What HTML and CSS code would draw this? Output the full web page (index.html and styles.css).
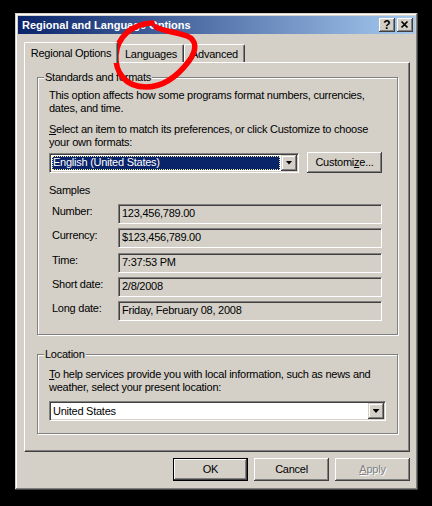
FILE: index.html
```html
<!DOCTYPE html>
<html lang="en">
<head>
    <meta charset="UTF-8">
    <meta name="viewport" content="width=device-width, initial-scale=1.0">
    <title>Regional and Language Options</title>
    <link rel="stylesheet" href="styles.css">
</head>
<body>
    <div class="window">
        <div class="titlebar">
            <span class="title">Regional and Language Options</span>
            <div class="caption-buttons">
                <span class="caption-btn help">?</span>
                <span class="caption-btn close">
                    <svg width="16" height="14" viewBox="0 0 16 14">
                        <path d="M4.5 3.5l6 6M10.5 3.5l-6 6" stroke="#000" stroke-width="1.7" fill="none"/>
                    </svg>
                </span>
            </div>
        </div>

        <div class="dialog">
            <div class="tabs">
                <div class="tab active">Regional Options</div>
                <div class="tab languages">Languages</div>
                <div class="tab advanced">Advanced</div>
            </div>

            <div class="tab-page">
                <div class="group standards">
                    <div class="group-title">Standards and formats</div>
                    <p class="intro">This option affects how some programs format numbers, currencies,<br>dates, and time.</p>
                    <p class="hint"><u>S</u>elect an item to match its preferences, or click Customize to choose<br>your own formats:</p>
                    <div class="format-row">
                        <div class="combo format-combo">
                            <div class="combo-value"><span class="selected">English (United States)</span></div>
                            <div class="combo-arrow"><i></i></div>
                        </div>
                        <button class="btn customize">Customi<u>z</u>e...</button>
                    </div>

                    <div class="samples-title">Samples</div>
                    <div class="samples">
                        <div class="sample"><span class="sample-label">Number:</span><span class="sample-field">123,456,789.00</span></div>
                        <div class="sample"><span class="sample-label">Currency:</span><span class="sample-field">$123,456,789.00</span></div>
                        <div class="sample"><span class="sample-label">Time:</span><span class="sample-field">7:37:53 PM</span></div>
                        <div class="sample"><span class="sample-label">Short date:</span><span class="sample-field">2/8/2008</span></div>
                        <div class="sample"><span class="sample-label">Long date:</span><span class="sample-field">Friday, February 08, 2008</span></div>
                    </div>
                </div>

                <div class="group location">
                    <div class="group-title">Location</div>
                    <p class="intro"><u>T</u>o help services provide you with local information, such as news and<br>weather, select your present location:</p>
                    <div class="combo location-combo">
                        <div class="combo-value">United States</div>
                        <div class="combo-arrow"><i></i></div>
                    </div>
                </div>
            </div>

            <div class="buttons">
                <button class="btn default">OK</button>
                <button class="btn">Cancel</button>
                <button class="btn disabled"><u>A</u>pply</button>
            </div>
        </div>
    </div>

    <!-- red marker scribble around the Languages tab -->
    <svg class="scribble" width="432" height="506" viewBox="0 0 432 506">
        <path d="M152 23C131 24 117 38 116 55C115 72 125 87 146 87C165 87 180 73 189 61C197 50 197 40 187 36C176 32 162 31 156 27"
              fill="none" stroke="#f00" stroke-width="5.5" stroke-linecap="round" stroke-linejoin="round"/>
    </svg>
</body>
</html>
```

FILE: styles.css
```css
body {
    margin: 0;
    padding: 13px 0 0 15px;
    background: #000;
    font-family: "Liberation Sans", Arial, sans-serif;
    font-size: 11px;
    line-height: 13px;
    letter-spacing: -0.25px;
    color: #000;
}
p {
    margin: 0;
    white-space: nowrap;
}

/* window frame */
.window {
    width: 403px;
    height: 477px;
    box-sizing: border-box;
    padding: 3px;
    background: #d4d0c8;
    box-shadow: inset -1px -1px 0 #404040, inset 1px 1px 0 #d4d0c8,
                inset -2px -2px 0 #808080, inset 2px 2px 0 #fff;
}
.titlebar {
    height: 18px;
    display: flex;
    align-items: center;
    justify-content: space-between;
    padding: 0 2px;
    background: linear-gradient(to right, #0a246a, #a6caf0);
}
.title {
    color: #fff;
    font-weight: bold;
    letter-spacing: 0;
    padding-left: 2px;
}
.caption-buttons {
    display: flex;
    gap: 2px;
}
.caption-btn {
    width: 16px;
    height: 14px;
    box-sizing: border-box;
    display: flex;
    align-items: center;
    justify-content: center;
    background: #d4d0c8;
    box-shadow: inset -1px -1px 0 #404040, inset 1px 1px 0 #fff,
                inset -2px -2px 0 #808080, inset 2px 2px 0 #d4d0c8;
}
.caption-btn.help {
    font-weight: bold;
    font-size: 12px;
    letter-spacing: 0;
}
.caption-btn svg {
    display: block;
}

.dialog {
    padding: 8px 5px 0 6px;
}

/* tabs */
.tabs {
    display: flex;
    align-items: flex-end;
    height: 20px;
}
.tab {
    height: 18px;
    box-sizing: border-box;
    padding-top: 3px;
    text-align: center;
    border: 1px solid;
    border-color: #fff #404040 transparent #fff;
    border-bottom: none;
    border-radius: 2px 2px 0 0;
    box-shadow: inset -1px 0 0 #808080;
}
.tab.active {
    width: 94px;
    height: 21px;
    margin-bottom: -1px;
    padding-top: 4px;
    position: relative;
    z-index: 1;
    background: #d4d0c8;
}
.tab.languages {
    width: 66px;
}
.tab.advanced {
    width: 61px;
}

.tab-page {
    height: 390px;
    box-sizing: border-box;
    border: 1px solid;
    border-color: #fff #404040 #404040 #fff;
    box-shadow: inset -1px -1px 0 #808080;
    padding: 14px 11px 0 12px;
}

/* etched group boxes */
.group {
    box-sizing: border-box;
    width: 361px;
    border: 1px solid #808080;
    box-shadow: inset 1px 1px 0 #fff, 1px 1px 0 #fff;
    padding: 0 10px 0 11px;
}
.group.standards {
    height: 258px;
}
.group.location {
    height: 80px;
    margin-top: 19px;
}
.group-title {
    display: table;
    margin: -7px 0 0 -5px;
    padding: 0 1px;
    background: #d4d0c8;
}
.standards .intro {
    margin-top: 5px;
}
.hint {
    margin-top: 8px;
}
.location .intro {
    margin-top: 7px;
}

/* combo boxes */
.combo {
    display: flex;
    box-sizing: border-box;
    height: 20px;
    padding: 1px;
    border: 1px solid;
    border-color: #808080 #fff #fff #808080;
    box-shadow: inset 1px 1px 0 #404040, inset -1px -1px 0 #d4d0c8;
    background: #fff;
}
.combo-value {
    flex: 1;
    display: flex;
    align-items: center;
    padding-left: 2px;
}
.format-combo .combo-value {
    padding: 1px;
}
.selected {
    flex: 1;
    align-self: stretch;
    display: flex;
    align-items: center;
    border: 1px dotted #f4e9a0;
    background: #0a246a;
    color: #fff;
}
.combo-arrow {
    width: 16px;
    height: 16px;
    box-sizing: border-box;
    display: flex;
    align-items: center;
    justify-content: center;
    background: #d4d0c8;
    box-shadow: inset -1px -1px 0 #404040, inset 1px 1px 0 #d4d0c8,
                inset -2px -2px 0 #808080, inset 2px 2px 0 #fff;
}
.combo-arrow i {
    width: 7px;
    height: 4px;
    background: #000;
    clip-path: polygon(0 0, 100% 0, 50% 100%);
}
.format-row {
    display: flex;
    align-items: center;
    gap: 8px;
    height: 21px;
    margin-top: 3px;
}
.format-combo {
    width: 250px;
}
.location-combo {
    width: 337px;
    margin-top: 7px;
}

/* samples */
.samples-title {
    margin-top: 11px;
}
.samples {
    display: flex;
    flex-direction: column;
    gap: 4.3px;
    margin-top: 7px;
}
.sample {
    display: flex;
    height: 20px;
}
.sample-label {
    width: 69px;
    box-sizing: border-box;
    padding: 1px 0 0 3px;
}
.sample-field {
    width: 264px;
    height: 20px;
    box-sizing: border-box;
    border: 1px solid;
    border-color: #808080 #fff #fff #808080;
    box-shadow: inset 1px 1px 0 #404040;
    padding: 2px 0 0 3px;
}

/* push buttons */
.btn {
    width: 75px;
    height: 23px;
    box-sizing: border-box;
    padding: 0;
    border: none;
    background: #d4d0c8;
    font: inherit;
    letter-spacing: inherit;
    color: #000;
    box-shadow: inset -1px -1px 0 #404040, inset 1px 1px 0 #fff,
                inset -2px -2px 0 #808080, inset 2px 2px 0 #d4d0c8;
}
.btn.customize {
    height: 21px;
}
.btn.default {
    border: 1px solid #000;
}
.btn.disabled {
    color: #808080;
    text-shadow: 1px 1px 0 #fff;
}
.buttons {
    display: flex;
    justify-content: flex-end;
    gap: 6px;
    margin-top: 6px;
}

.scribble {
    position: absolute;
    top: 0;
    left: 0;
    pointer-events: none;
}
```
